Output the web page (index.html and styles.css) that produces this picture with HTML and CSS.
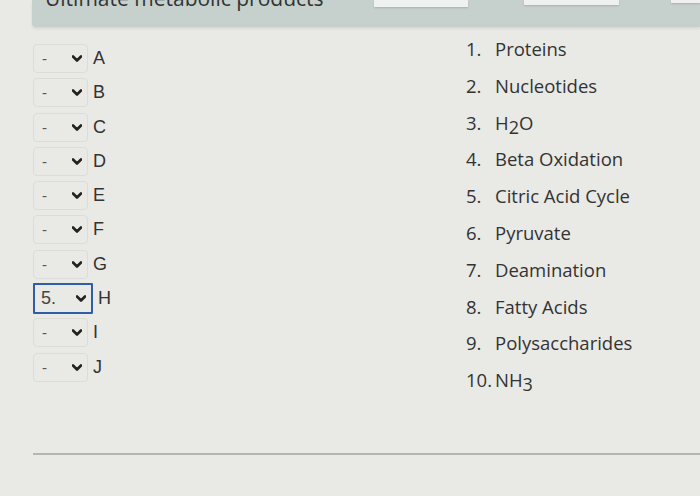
FILE: index.html
```html
<!DOCTYPE html>
<html>
<head>
<meta charset="utf-8">
<title>Ultimate metabolic products</title>
<link rel="stylesheet" href="styles.css">
</head>
<body>

<div class="head">
  <div class="title">Ultimate metabolic products</div>
  <div class="slot s1"></div>
  <div class="slot s2"></div>
  <div class="slot s3"></div>
</div>

<div class="match">
  <div class="picks">
    <div class="row"><div class="sel"><span class="val">-</span><svg class="chev" viewBox="0 0 10 6"><path d="M1 1 L5 5 L9 1"/></svg></div><span class="let">A</span></div>
    <div class="row"><div class="sel"><span class="val">-</span><svg class="chev" viewBox="0 0 10 6"><path d="M1 1 L5 5 L9 1"/></svg></div><span class="let">B</span></div>
    <div class="row"><div class="sel"><span class="val">-</span><svg class="chev" viewBox="0 0 10 6"><path d="M1 1 L5 5 L9 1"/></svg></div><span class="let">C</span></div>
    <div class="row"><div class="sel"><span class="val">-</span><svg class="chev" viewBox="0 0 10 6"><path d="M1 1 L5 5 L9 1"/></svg></div><span class="let">D</span></div>
    <div class="row"><div class="sel"><span class="val">-</span><svg class="chev" viewBox="0 0 10 6"><path d="M1 1 L5 5 L9 1"/></svg></div><span class="let">E</span></div>
    <div class="row"><div class="sel"><span class="val">-</span><svg class="chev" viewBox="0 0 10 6"><path d="M1 1 L5 5 L9 1"/></svg></div><span class="let">F</span></div>
    <div class="row"><div class="sel"><span class="val">-</span><svg class="chev" viewBox="0 0 10 6"><path d="M1 1 L5 5 L9 1"/></svg></div><span class="let">G</span></div>
    <div class="row"><div class="sel on"><span class="val">5.</span><svg class="chev" viewBox="0 0 10 6"><path d="M1 1 L5 5 L9 1"/></svg></div><span class="let">H</span></div>
    <div class="row"><div class="sel"><span class="val">-</span><svg class="chev" viewBox="0 0 10 6"><path d="M1 1 L5 5 L9 1"/></svg></div><span class="let">I</span></div>
    <div class="row"><div class="sel"><span class="val">-</span><svg class="chev" viewBox="0 0 10 6"><path d="M1 1 L5 5 L9 1"/></svg></div><span class="let">J</span></div>
  </div>

  <ol class="answers">
    <li><span class="num">1.</span>Proteins</li>
    <li><span class="num">2.</span>Nucleotides</li>
    <li><span class="num">3.</span>H<sub>2</sub>O</li>
    <li><span class="num">4.</span>Beta Oxidation</li>
    <li><span class="num">5.</span>Citric Acid Cycle</li>
    <li><span class="num">6.</span>Pyruvate</li>
    <li><span class="num">7.</span>Deamination</li>
    <li><span class="num">8.</span>Fatty Acids</li>
    <li><span class="num">9.</span>Polysaccharides</li>
    <li><span class="num">10.</span>NH<sub>3</sub></li>
  </ol>
</div>

<div class="rule"></div>

</body>
</html>
```

FILE: styles.css
```css
body {margin: 0; background: #e9e9e5; color: #333; font-family: "Open Sans", sans-serif; height: 496px; overflow: hidden;}

.head {display: flex; margin-left: 32px; height: 27px; background: #c6d0cc; overflow: hidden; border-radius: 0 0 0 4px; box-shadow: 0 2px 3px rgba(0,0,0,0.08);}
.title {width: 330px; padding-left: 13px; margin-top: -16px; font-size: 21px; color: #2f3535; white-space: nowrap;}
.slot {height: 7px; background: #eef1f0; box-shadow: 0 1px 2px rgba(0,0,0,0.15);}
.s1 {width: 96px; margin-left: 5px;}
.s2 {width: 96px; margin-left: 56px; height: 5px;}
.s3 {width: 30px; margin-left: 52px; height: 3px;}

.match {display: flex; margin-top: 17px;}

.picks {display: flex; flex-direction: column; gap: 5.3px; padding-left: 33px; width: 400px;}
.row {display: flex; align-items: center; height: 29px; font-family: "Liberation Sans", Arial, sans-serif;}
.sel {display: flex; align-items: center; justify-content: space-between; box-sizing: border-box; width: 55px; height: 29px; padding: 0 5px 0 8px; border: 1px solid #dcdcd8; border-radius: 4px; font-size: 15px; color: #555;}
.sel.on {width: 60px; height: 31px; border: 2px solid #2f5ea6; border-radius: 1px; padding-left: 6px; font-size: 18px; color: #444;}
.chev {width: 10px; height: 7px;}
.chev path {fill: none; stroke: #222; stroke-width: 2.6; stroke-linecap: round; stroke-linejoin: round;}
.let {margin-left: 5px; font-size: 18px; color: #333;}

.answers {list-style: none; margin: -7px 0 0 33px; padding: 0; font-size: 18.5px;}
.answers li {height: 36.8px; line-height: 24px; white-space: nowrap;}
.num {display: inline-block; width: 29px;}
.answers sub {font-size: 18px; vertical-align: -4px; line-height: 0;}

.rule {margin: 48px 0 0 33px; height: 2px; background: #b4b6b4;}
```
